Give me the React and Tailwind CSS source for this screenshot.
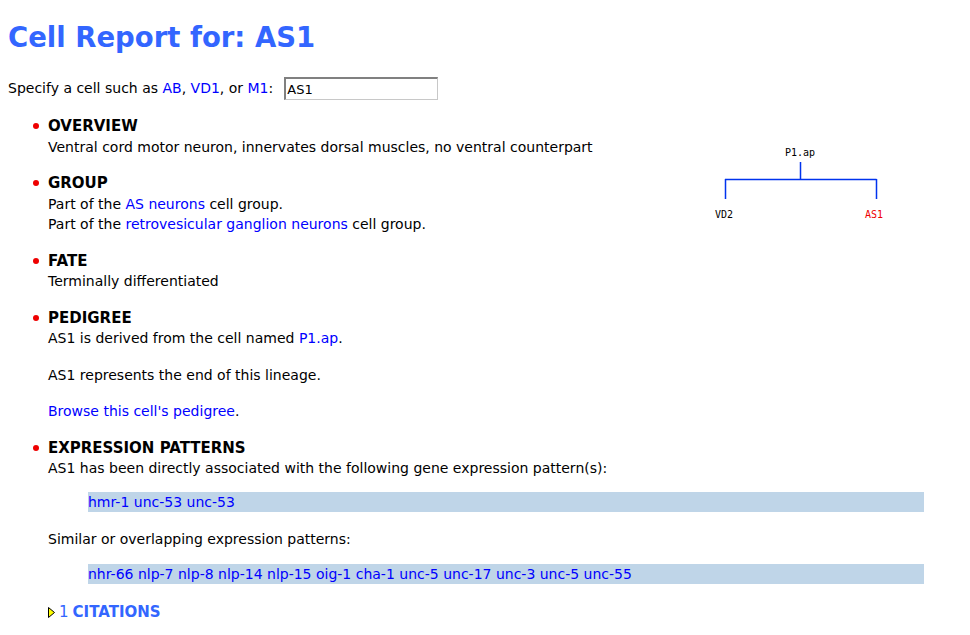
import React from 'react';

const link = "text-[#0000ff]";

const Section = ({ title, children, last }) => (
    <li className={`relative ${last ? "mb-[18px]" : "mb-[16px]"}`}>
        <span className="absolute left-[-15px] top-[7px] w-[6px] h-[6px] rounded-full bg-[#ee0000]" />
        <div className="font-bold text-[15px] text-black">{title}</div>
        <div>{children}</div>
    </li>
);

const Tree = () => (
    <svg width="200" height="90" viewBox="0 0 200 90" className="block">
        <text x="100" y="12" textAnchor="middle" fontFamily="'DejaVu Sans Mono', monospace" fontSize="10" fill="#000">P1.ap</text>
        <path d="M100.5 18 V35.5 M25 35.5 H176.5 M25.5 35 V55 M176.5 35 V55" stroke="#0033ee" strokeWidth="1.5" fill="none" />
        <text x="24" y="74" textAnchor="middle" fontFamily="'DejaVu Sans Mono', monospace" fontSize="10" fill="#000">VD2</text>
        <text x="174" y="74" textAnchor="middle" fontFamily="'DejaVu Sans Mono', monospace" fontSize="10" fill="#ee0000">AS1</text>
    </svg>
);

export default function App() {
    return (
        <div className="bg-white min-h-[635px] p-[8px] text-[14px] leading-[20.5px] text-black" style={{ fontFamily: "'DejaVu Sans', sans-serif" }}>
            <h1 className="text-[27.5px] font-bold text-[#3366ff] leading-[36px] mt-[11px] mb-[22px]">Cell Report for: AS1</h1>
            <div className="flex items-center mb-[16px]">
                <span>Specify a cell such as <span className={link}>AB</span>, <span className={link}>VD1</span>, or <span className={link}>M1</span>:</span>
                <input
                    defaultValue="AS1"
                    className="ml-[11px] w-[154px] h-[23px] px-[1px] text-[13px] border border-[#c8c8c8] border-t-[#808080] border-l-[#808080] border-t-2 border-l-2 outline-none"
                    style={{ fontFamily: "'DejaVu Sans', sans-serif" }}
                />
            </div>
            <div className="float-right mr-[62px] mt-[28px]">
                <Tree />
            </div>
            <ul className="pl-[40px]">
                <Section title="OVERVIEW">
                    Ventral cord motor neuron, innervates dorsal muscles, no ventral counterpart
                </Section>
                <Section title="GROUP">
                    <div>Part of the <span className={link}>AS neurons</span> cell group.</div>
                    <div>Part of the <span className={link}>retrovesicular ganglion neurons</span> cell group.</div>
                </Section>
                <Section title="FATE">
                    Terminally differentiated
                </Section>
                <Section title="PEDIGREE">
                    <p>AS1 is derived from the cell named <span className={link}>P1.ap</span>.</p>
                    <p className="mt-[16px]">AS1 represents the end of this lineage.</p>
                    <p className="mt-[16px]"><span className={link}>Browse this cell's pedigree</span>.</p>
                </Section>
                <Section title="EXPRESSION PATTERNS" last>
                    <p>AS1 has been directly associated with the following gene expression pattern(s):</p>
                    <div className={`mt-[13px] ml-[40px] w-[836px] h-[20px] bg-[#bfd5e8] ${link}`}>hmr-1 unc-53 unc-53</div>
                    <p className="mt-[17px]">Similar or overlapping expression patterns:</p>
                    <div className={`mt-[15px] ml-[40px] w-[836px] h-[20px] bg-[#bfd5e8] ${link}`}>nhr-66 nlp-7 nlp-8 nlp-14 nlp-15 oig-1 cha-1 unc-5 unc-17 unc-3 unc-5 unc-55</div>
                </Section>
                <li className="flex items-center text-[#3366ff] text-[15px]">
                    <svg width="7" height="11" viewBox="0 0 7 11" className="mr-[4px]">
                        <path d="M0.5 0.5 L6.5 5.5 L0.5 10.5 Z" fill="#ffff00" stroke="#000" strokeWidth="1" />
                    </svg>
                    <span>1</span>
                    <span className="font-bold ml-[4px]">CITATIONS</span>
                </li>
            </ul>
        </div>
    );
}
